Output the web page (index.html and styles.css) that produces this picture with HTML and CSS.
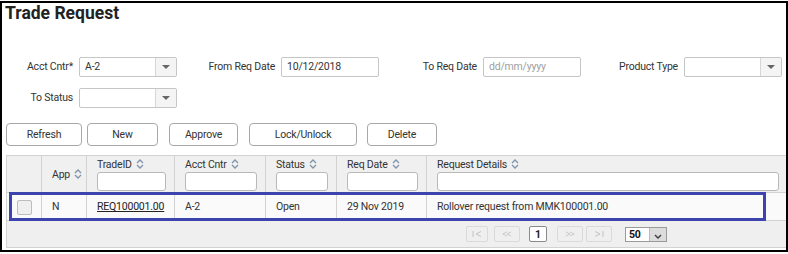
FILE: index.html
```html
<!DOCTYPE html>
<html lang="en">
  <head>
    <meta charset="UTF-8" />
    <title>Trade Request</title>
    <link rel="stylesheet" href="styles.css">
  </head>
  <body>
    <div class="frame">
      <h1 class="title">Trade Request</h1>

      <div class="filters">
        <label class="lbl">Acct Cntr*</label>
        <div class="select"><span class="val">A-2</span><span class="drop"><i class="caret"></i></span></div>
        <label class="lbl">From Req Date</label>
        <div class="input">10/12/2018</div>
        <label class="lbl">To Req Date</label>
        <div class="input ph">dd/mm/yyyy</div>
        <label class="lbl">Product Type</label>
        <div class="select"><span class="val"></span><span class="drop"><i class="caret"></i></span></div>

        <label class="lbl">To Status</label>
        <div class="select"><span class="val"></span><span class="drop"><i class="caret"></i></span></div>
      </div>

      <div class="toolbar">
        <button class="btn w-refresh">Refresh</button>
        <button class="btn w-new">New</button>
        <button class="btn w-approve">Approve</button>
        <button class="btn w-lock">Lock/Unlock</button>
        <button class="btn w-delete">Delete</button>
      </div>

      <div class="grid-wrap">
        <table class="grid">
          <colgroup>
            <col style="width:35px"><col style="width:45px"><col style="width:88px"><col style="width:91px">
            <col style="width:71px"><col style="width:90px"><col>
          </colgroup>
          <tr class="head">
            <th class="chk"></th>
            <th class="mid">App <svg class="sort" viewBox="0 0 8 10"><path d="M1 4 L4 1 L7 4 M1 6 L4 9 L7 6"/></svg></th>
            <th>TradeID <svg class="sort" viewBox="0 0 8 10"><path d="M1 4 L4 1 L7 4 M1 6 L4 9 L7 6"/></svg><div class="filter"></div></th>
            <th>Acct Cntr <svg class="sort" viewBox="0 0 8 10"><path d="M1 4 L4 1 L7 4 M1 6 L4 9 L7 6"/></svg><div class="filter"></div></th>
            <th>Status <svg class="sort" viewBox="0 0 8 10"><path d="M1 4 L4 1 L7 4 M1 6 L4 9 L7 6"/></svg><div class="filter"></div></th>
            <th>Req Date <svg class="sort" viewBox="0 0 8 10"><path d="M1 4 L4 1 L7 4 M1 6 L4 9 L7 6"/></svg><div class="filter"></div></th>
            <th>Request Details <svg class="sort" viewBox="0 0 8 10"><path d="M1 4 L4 1 L7 4 M1 6 L4 9 L7 6"/></svg><div class="filter"></div></th>
          </tr>
          <tr class="row">
            <td class="chk"><span class="box"></span></td>
            <td>N</td>
            <td><a class="link">REQ100001.00</a></td>
            <td>A-2</td>
            <td>Open</td>
            <td>29 Nov 2019</td>
            <td>Rollover request from MMK100001.00</td>
          </tr>
          <tr class="pager">
            <td colspan="7">
              <div class="pages">
                <span class="pg w-first"><svg viewBox="0 0 10 6"><path d="M1 0 V6 M9 0.5 L4 3 L9 5.5"/></svg></span>
                <span class="pg"><svg viewBox="0 0 12 6"><path d="M6 0.5 L1 3 L6 5.5 M11 0.5 L6 3 L11 5.5"/></svg></span>
                <span class="pg cur">1</span>
                <span class="pg"><svg viewBox="0 0 12 6"><path d="M1 0.5 L6 3 L1 5.5 M6 0.5 L11 3 L6 5.5"/></svg></span>
                <span class="pg"><svg viewBox="0 0 10 6"><path d="M1 0.5 L6 3 L1 5.5 M9 0 V6"/></svg></span>
                <span class="size"><b>50</b><span class="size-drop"><svg viewBox="0 0 8 5"><path d="M1 1 L4 4 L7 1"/></svg></span></span>
              </div>
            </td>
          </tr>
        </table>
        <div class="highlight"></div>
      </div>
    </div>
  </body>
</html>
```

FILE: styles.css
```css
* {
  box-sizing: border-box;
}
body {
  margin: 0;
  background: #fff;
  font-family: Roboto, 'Liberation Sans', sans-serif;
  font-size: 10.5px;
  letter-spacing: -0.2px;
  color: #333;
}
.frame {
  margin-top: 1px;
  height: 251px;
  border: 2px solid #000;
  overflow: hidden;
}
.title {
  margin: 0 0 0 3px;
  font-size: 17.5px;
  line-height: 20px;
  font-weight: 700;
  letter-spacing: 0;
  color: #222;
}

/* filter form */
.filters {
  display: grid;
  grid-template-columns: 77px 98px 104px 98px 104px 98px 103px 98px;
  grid-auto-rows: 20px;
  row-gap: 11px;
  margin-top: 34px;
}
.lbl {
  text-align: right;
  padding-right: 6px;
  line-height: 20px;
  color: #333;
}
.select {
  display: flex;
  border: 1px solid #c6c6c6;
  border-radius: 2px;
  background: #fff;
}
.select .val {
  flex: 1;
  padding-left: 5px;
  line-height: 18px;
}
.select .drop {
  width: 21px;
  border-left: 1px solid #d6d6d6;
  background: #f4f4f4;
  display: flex;
  align-items: center;
  justify-content: center;
}
.caret {
  width: 0;
  height: 0;
  border-left: 4px solid transparent;
  border-right: 4px solid transparent;
  border-top: 4px solid #666;
}
.input {
  border: 1px solid #c6c6c6;
  border-radius: 2px;
  padding-left: 5px;
  line-height: 18px;
  background: #fff;
}
.input.ph {
  color: #a0a0a0;
}

/* buttons */
.toolbar {
  display: flex;
  margin: 15px 0 0 4px;
}
.btn {
  height: 23px;
  border: 1px solid #a8a8a8;
  border-radius: 4px;
  background: #fff;
  font-family: inherit;
  font-size: 10.5px;
  letter-spacing: -0.2px;
  color: #333;
  padding: 0;
}
.w-refresh { width: 76px; margin-right: 5px; }
.w-new { width: 71px; margin-right: 11px; }
.w-approve { width: 69px; margin-right: 11px; }
.w-lock { width: 108px; margin-right: 10px; }
.w-delete { width: 70px; }

/* grid */
.grid-wrap {
  position: relative;
  margin: 9px 0 0 4px;
}
.grid {
  width: 782px;
  border-collapse: collapse;
  table-layout: fixed;
}
.grid th,
.grid td {
  border: 1px solid #d2d2d2;
  text-align: left;
  font-weight: 400;
  white-space: nowrap;
  padding: 0 8px 0 10px;
}
.head {
  height: 37px;
  background: #f0f0f0;
}
.head th {
  vertical-align: top;
  padding-top: 2px;
  line-height: 14px;
}
.head th.mid {
  vertical-align: middle;
}
.sort {
  width: 8px;
  height: 10px;
  margin-left: 2px;
  vertical-align: -1px;
  fill: none;
  stroke: #7f93ab;
  stroke-width: 1.3;
}
.filter {
  height: 19px;
  border: 1px solid #b9b9b9;
  border-radius: 3px;
  background: #fff;
}
.row {
  height: 28px;
  background: #fafafa;
}
.chk {
  padding: 0 !important;
  text-align: center !important;
}
.box {
  display: inline-block;
  width: 15px;
  height: 15px;
  margin-top: 4px;
  border: 1px solid #bdbdbd;
  border-radius: 2px;
  background: #efefef;
}
.link {
  color: #222;
  text-decoration: underline;
}
.pager {
  height: 27px;
  background: #efefef;
}
.pages {
  display: flex;
  align-items: center;
  padding-left: 449px;
}
.pg {
  width: 26px;
  height: 16px;
  margin-right: 3px;
  border: 1px solid #dadada;
  border-radius: 2px;
  display: flex;
  align-items: center;
  justify-content: center;
}
.pg.w-first {
  width: 22px;
  margin-right: 6px;
}
.pg svg {
  width: 10px;
  height: 6px;
  fill: none;
  stroke: #c2c2c2;
  stroke-width: 1;
}
.pg.cur {
  width: 18px;
  margin: 0 10px 0 6px;
  border-color: #8a8a8a;
  background: #fff;
  font-weight: 700;
  color: #222;
}
.size {
  display: flex;
  width: 42px;
  height: 15px;
  margin-left: 10px;
  border: 1px solid #9a9a9a;
  background: #fff;
}
.size b {
  flex: 1;
  padding-left: 3px;
  line-height: 13px;
  color: #111;
}
.size-drop {
  width: 17px;
  border-left: 1px solid #bbb;
  background: #dcdcdc;
  display: flex;
  align-items: flex-end;
  justify-content: center;
  padding-bottom: 2px;
}
.size-drop svg {
  width: 8px;
  height: 5px;
  fill: none;
  stroke: #444;
  stroke-width: 1.5;
}
.highlight {
  position: absolute;
  left: 3px;
  top: 37px;
  width: 757px;
  height: 29px;
  border: 3px solid #3d44ad;
}
```
